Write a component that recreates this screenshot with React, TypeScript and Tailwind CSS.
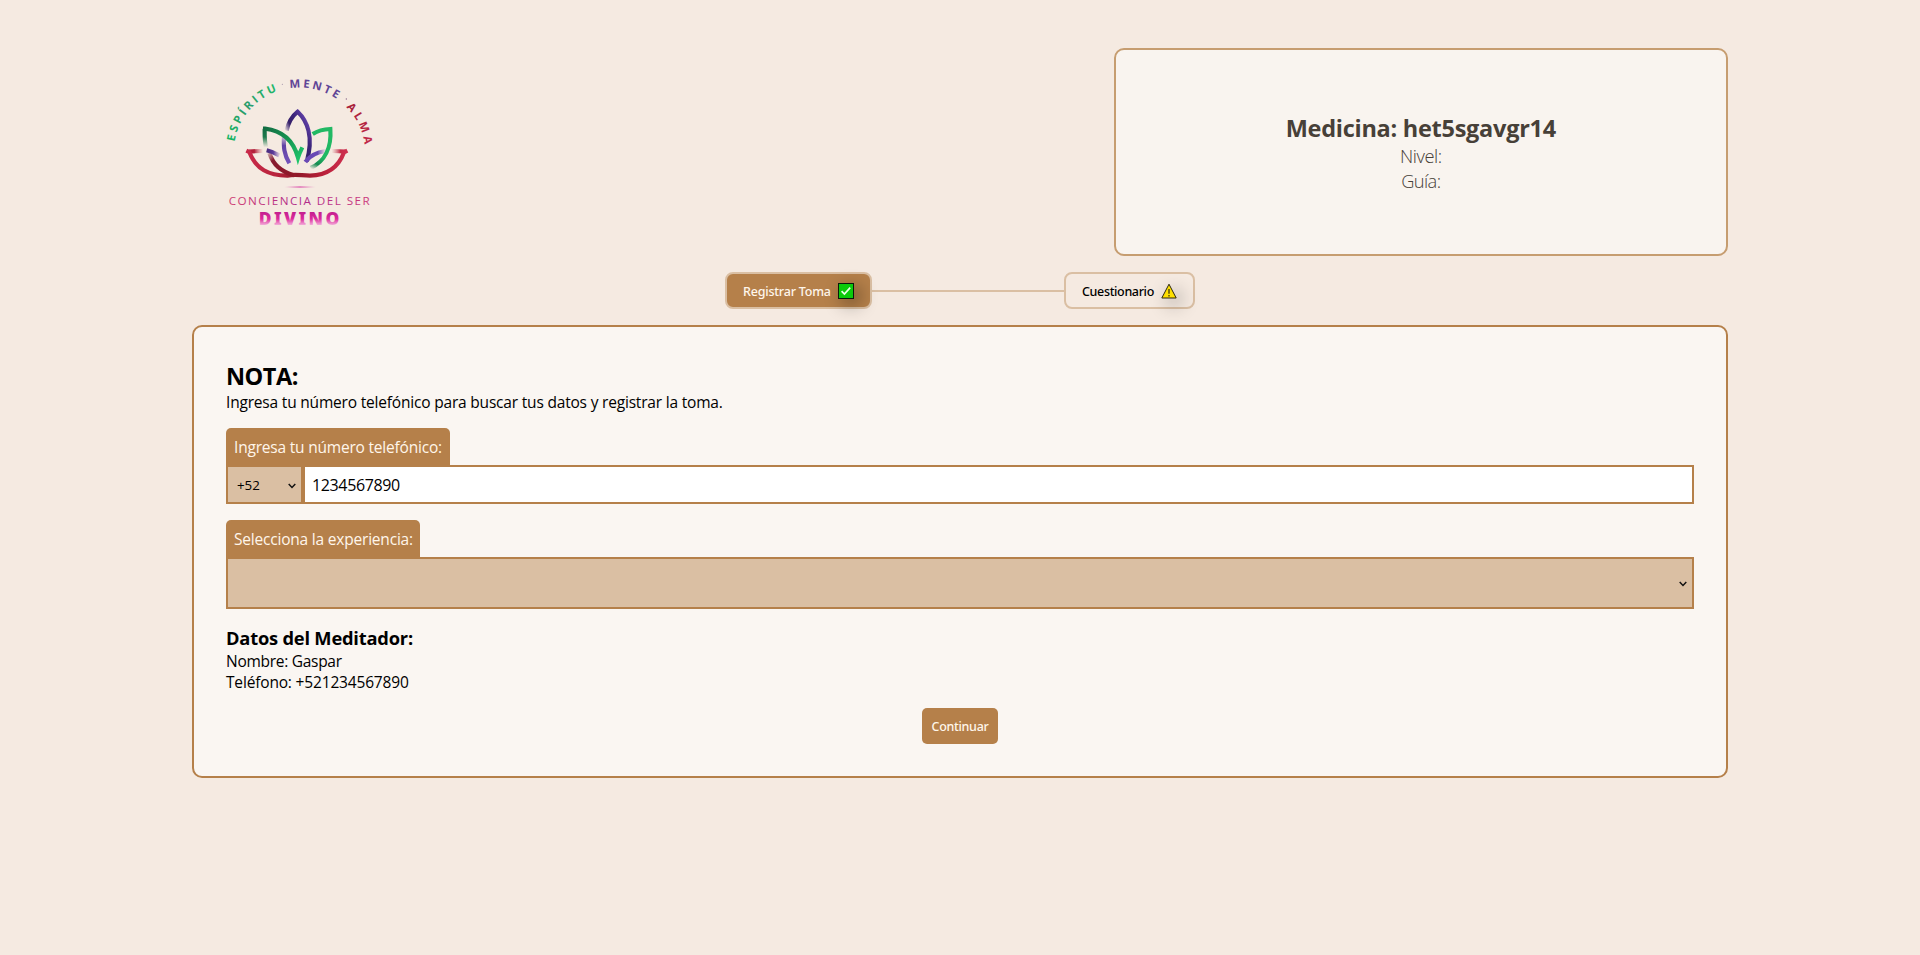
import type { ReactNode } from "react";

const petalStroke = {
  fill: "none",
  strokeWidth: 12.5,
  strokeLinejoin: "miter" as const,
};

function Logo() {
  return (
    <svg viewBox="0 0 540 540" className="ml-[18px] mt-3 h-[180px] w-[180px]" aria-label="Conciencia del Ser Divino">
      <defs>
        <path id="arc" d="M73.4 245A197 194 0 0 1 464.6 285" />
        <linearGradient id="espiritu" x1="60" y1="240" x2="195" y2="80" gradientUnits="userSpaceOnUse">
          <stop offset="0" stopColor="#18b562" />
          <stop offset="0.5" stopColor="#2a9a6c" />
          <stop offset="1" stopColor="#1fb86a" />
        </linearGradient>
        <linearGradient id="alma" x1="415" y1="130" x2="480" y2="245" gradientUnits="userSpaceOnUse">
          <stop offset="0" stopColor="#a51f38" />
          <stop offset="1" stopColor="#c02848" />
        </linearGradient>
        <linearGradient id="name" x1="57" y1="0" x2="478" y2="0" gradientUnits="userSpaceOnUse">
          <stop offset="0" stopColor="#cf3a70" />
          <stop offset="0.5" stopColor="#b02c8c" />
          <stop offset="1" stopColor="#cc3a7c" />
        </linearGradient>
        <linearGradient id="divino" x1="0" y1="457" x2="0" y2="496" gradientUnits="userSpaceOnUse">
          <stop offset="0" stopColor="#c3208f" />
          <stop offset="0.5" stopColor="#dd2a9c" />
          <stop offset="1" stopColor="#f3b6dc" />
        </linearGradient>
        <linearGradient id="rule" x1="222" y1="0" x2="318" y2="0" gradientUnits="userSpaceOnUse">
          <stop offset="0" stopColor="#e58cc0" stopOpacity="0" />
          <stop offset="0.5" stopColor="#e58cc0" />
          <stop offset="1" stopColor="#e58cc0" stopOpacity="0" />
        </linearGradient>
        <linearGradient id="purpleTop" x1="226" y1="214" x2="290" y2="180" gradientUnits="userSpaceOnUse">
          <stop offset="0" stopColor="#3a2378" stopOpacity="0" />
          <stop offset="0.3" stopColor="#36206a" />
          <stop offset="0.6" stopColor="#3b2478" />
          <stop offset="1" stopColor="#5f3fa6" />
        </linearGradient>
        <linearGradient id="purpleLeft" x1="0" y1="220" x2="0" y2="312" gradientUnits="userSpaceOnUse">
          <stop offset="0" stopColor="#6a4bb0" stopOpacity="0" />
          <stop offset="0.4" stopColor="#6042a4" />
          <stop offset="1" stopColor="#7453bb" />
        </linearGradient>
        <linearGradient id="purpleRight" x1="285" y1="0" x2="348" y2="0" gradientUnits="userSpaceOnUse">
          <stop offset="0" stopColor="#6a48b5" />
          <stop offset="0.6" stopColor="#6a48b5" />
          <stop offset="1" stopColor="#6a48b5" stopOpacity="0" />
        </linearGradient>
        <linearGradient id="purpleSmall" x1="168" y1="0" x2="212" y2="0" gradientUnits="userSpaceOnUse">
          <stop offset="0" stopColor="#46297c" />
          <stop offset="0.5" stopColor="#5a3b98" />
          <stop offset="1" stopColor="#6a4bb0" stopOpacity="0" />
        </linearGradient>
        <linearGradient id="greenStem" x1="0" y1="200" x2="0" y2="262" gradientUnits="userSpaceOnUse">
          <stop offset="0" stopColor="#12653f" />
          <stop offset="0.5" stopColor="#1c7a4c" />
          <stop offset="1" stopColor="#1c7a4c" stopOpacity="0" />
        </linearGradient>
        <linearGradient id="greenLeft" x1="160" y1="200" x2="272" y2="300" gradientUnits="userSpaceOnUse">
          <stop offset="0" stopColor="#126a41" />
          <stop offset="0.6" stopColor="#189a55" />
          <stop offset="1" stopColor="#1fc76b" />
        </linearGradient>
        <linearGradient id="greenRight" x1="350" y1="205" x2="302" y2="326" gradientUnits="userSpaceOnUse">
          <stop offset="0" stopColor="#22b964" />
          <stop offset="0.65" stopColor="#1fb863" />
          <stop offset="0.85" stopColor="#178a50" />
          <stop offset="1" stopColor="#178a50" stopOpacity="0" />
        </linearGradient>
        <linearGradient id="red" x1="110" y1="0" x2="412" y2="0" gradientUnits="userSpaceOnUse">
          <stop offset="0" stopColor="#c92a4a" />
          <stop offset="0.3" stopColor="#b8243c" />
          <stop offset="0.5" stopColor="#8f1828" />
          <stop offset="0.75" stopColor="#b81f38" />
          <stop offset="1" stopColor="#cf3050" />
        </linearGradient>
        <linearGradient id="redTipL" x1="115" y1="0" x2="160" y2="0" gradientUnits="userSpaceOnUse">
          <stop offset="0" stopColor="#b3203a" />
          <stop offset="0.4" stopColor="#b3203a" />
          <stop offset="1" stopColor="#d06a78" stopOpacity="0" />
        </linearGradient>
        <linearGradient id="redTipR" x1="365" y1="0" x2="408" y2="0" gradientUnits="userSpaceOnUse">
          <stop offset="0" stopColor="#d06a78" stopOpacity="0" />
          <stop offset="0.6" stopColor="#c42c48" />
          <stop offset="1" stopColor="#cf3050" />
        </linearGradient>
        <linearGradient id="redInner" x1="175" y1="280" x2="245" y2="346" gradientUnits="userSpaceOnUse">
          <stop offset="0" stopColor="#7d2238" stopOpacity="0.3" />
          <stop offset="0.25" stopColor="#861c30" />
          <stop offset="1" stopColor="#8f1828" />
        </linearGradient>
      </defs>

      <g className="font-['Open_Sans',sans-serif] text-[34px] font-bold">
        <text fill="url(#espiritu)">
          <textPath href="#arc" startOffset="0" textLength="207">ESPÍRITU</textPath>
        </text>
        <text fill="#5f4596">
          <textPath href="#arc" startOffset="247" textLength="147">MENTE</textPath>
        </text>
        <text fill="url(#alma)">
          <textPath href="#arc" startOffset="432" textLength="127">ALMA</textPath>
        </text>
      </g>
      <circle cx="217" cy="73" r="1.5" fill="#8a7a9a" />
      <circle cx="409" cy="117" r="2" fill="#8a6a8a" />

      <g {...petalStroke}>
        <path d="M117 275Q138 273 158 273" stroke="url(#redTipL)" />
        <path d="M366 273Q388 273 405 275" stroke="url(#redTipR)" />
        <path d="M109 272L118 276C138 328 176 346 232 347C256 341 274 347 300 347C350 346 384 326 402 277L412 272" stroke="url(#red)" />
        <path d="M178 279C190 315 212 334 252 346" stroke="url(#redInner)" />
        <path d="M170 271Q190 276 208 286" stroke="url(#purpleSmall)" />
        <path d="M222 226C220 262 222 282 238 310" stroke="url(#purpleLeft)" />
        <path d="M230 212C235 186 247 168 263 155C292 182 312 232 290 304" stroke="url(#purpleTop)" />
        <path d="M286 306Q304 279 348 273" stroke="url(#purpleRight)" />
        <path d="M168 262C163 240 164 226 164 206" stroke="url(#greenStem)" />
        <path d="M159 206H165C214 212 250 240 264 293Q268 280 277 262" stroke="url(#greenLeft)" />
        <path d="M308 222Q330 208 361 207C365 262 345 304 302 324" stroke="url(#greenRight)" />
      </g>

      <ellipse cx="270" cy="381" rx="48" ry="3" fill="url(#rule)" />
      <text x="56" y="435" textLength="423" fill="url(#name)" className="font-['Open_Sans',sans-serif] text-[35px] font-medium">
        CONCIENCIA DEL SER
      </text>
      <text x="146" y="494" textLength="242" fill="url(#divino)" className="font-['Noto_Sans',sans-serif] text-[52px] font-black">
        DIVINO
      </text>
    </svg>
  );
}

function CheckIcon() {
  return (
    <svg viewBox="0 0 16 16" className="mt-px h-4 w-4 shrink-0 drop-shadow-[5px_5px_9px_rgba(0,0,0,0.45)]">
      <rect x="0.5" y="0.5" width="15" height="15" fill="#0bcb0b" stroke="#0a1a0a" />
      <path d="M3.6 8.2L6.4 11L12.2 4.6" fill="none" stroke="#e9ffe6" strokeWidth="1.7" />
    </svg>
  );
}

function WarningIcon() {
  return (
    <svg viewBox="0 0 16 16" className="mt-px h-4 w-4 shrink-0 drop-shadow-[5px_5px_9px_rgba(0,0,0,0.45)]">
      <path d="M8 1.2L15.2 15H0.8Z" fill="#ffe000" stroke="#2b2710" strokeWidth="1" strokeLinejoin="round" />
      <path d="M8 6v4.8M8 12v1.4" stroke="#2b2710" strokeWidth="1.2" />
    </svg>
  );
}

function Chevron() {
  return (
    <svg viewBox="0 0 8 6" className="h-1.5 w-2">
      <path d="M0.7 1L4 4.4L7.3 1" fill="none" stroke="#111" strokeWidth="1.5" />
    </svg>
  );
}

function FieldLabel({ children, className }: { children: ReactNode; className: string }) {
  return (
    <div className={`h-[37px] rounded-t-[5px] bg-[#b5804a] px-2 pt-[9px] text-[15.5px]/[21px] whitespace-nowrap text-[#fff6ea] ${className}`}>
      {children}
    </div>
  );
}

export default function App() {
  return (
    <div className="min-h-screen bg-[#f5eae1] pt-12 font-['Open_Sans','Noto_Sans',sans-serif] text-black">
      <div className="mx-auto flex w-4/5 flex-col gap-4">
        <header className="flex h-52 justify-between">
          <Logo />
          <section className="flex w-2/5 flex-col items-center justify-center rounded-[10px] border-2 border-[#c69d70] bg-[#f9f4ef] text-[#474038]">
            <h1 className="h-8 pt-px text-[23.5px]/8 font-bold tracking-[-0.27px]">Medicina: het5sgavgr14</h1>
            <p className="text-[18.3px]/[25px] font-light tracking-[-0.4px]">Nivel:</p>
            <p className="text-[18.3px]/[25px] font-light tracking-[-0.6px]">Guía:</p>
          </section>
        </header>

        <nav className="flex h-[37px] items-center justify-center font-['Noto_Sans',sans-serif] text-[12.5px]/[17px] font-medium">
          <button className="flex h-full w-[147px] items-center justify-between rounded-lg border-2 border-[#dabfa3] bg-[#b5804a] px-4 tracking-[-0.2px] whitespace-nowrap text-[#fff6ea]">
            <span className="pt-0.5">Registrar Toma</span>
            <CheckIcon />
          </button>
          <div className="h-0.5 w-48 bg-[#dabfa3]" />
          <button className="flex h-full w-[131px] items-center justify-between rounded-lg border-2 border-[#dabfa3] px-4 tracking-[-0.35px] whitespace-nowrap">
            <span className="pt-0.5">Cuestionario</span>
            <WarningIcon />
          </button>
        </nav>

        <main className="flex flex-col gap-4 rounded-[10px] border-2 border-[#b5804a] bg-[#faf6f2] p-8">
          <div className="h-[53px] pt-px">
            <h2 className="text-[23.5px]/8 font-bold tracking-[-0.5px]">NOTA:</h2>
            <p className="text-[15.5px]/[21px] tracking-[-0.19px]">
              Ingresa tu número telefónico para buscar tus datos y registrar la toma.
            </p>
          </div>

          <div>
            <FieldLabel className="w-56 tracking-[-0.2px]">Ingresa tu número telefónico:</FieldLabel>
            <div className="flex h-[39px]">
              <div className="flex w-[77px] items-center justify-between border-2 border-[#b5804a] bg-[#dabfa3] pt-0.5 pr-[5px] pl-[9px] text-[13.33px]">
                +52
                <Chevron />
              </div>
              <input
                className="min-w-0 flex-1 border-2 border-[#b5804a] bg-white pr-2 pl-[7px] text-base tracking-[-0.36px] outline-none"
                defaultValue="1234567890"
              />
            </div>
          </div>

          <div>
            <FieldLabel className="w-[194px] tracking-[-0.2px]">Selecciona la experiencia:</FieldLabel>
            <div className="flex h-[52px] items-center justify-end border-2 border-[#b5804a] bg-[#dabfa3] pt-px pr-[5px]">
              <Chevron />
            </div>
          </div>

          <div className="h-[67px]">
            <h3 className="text-[18.3px]/[26px] font-bold tracking-[-0.2px]">Datos del Meditador:</h3>
            <p className="text-[15.5px]/[21px] tracking-[-0.28px]">Nombre: Gaspar</p>
            <p className="text-[15.5px]/[21px] tracking-[-0.17px]">Teléfono: +521234567890</p>
          </div>

          <button className="h-9 w-[76px] self-center rounded-[5px] bg-[#b5804a] pt-0.5 font-['Noto_Sans',sans-serif] text-[12.5px] font-medium tracking-[-0.3px] text-[#fff6ea]">
            Continuar
          </button>
        </main>
      </div>
    </div>
  );
}
